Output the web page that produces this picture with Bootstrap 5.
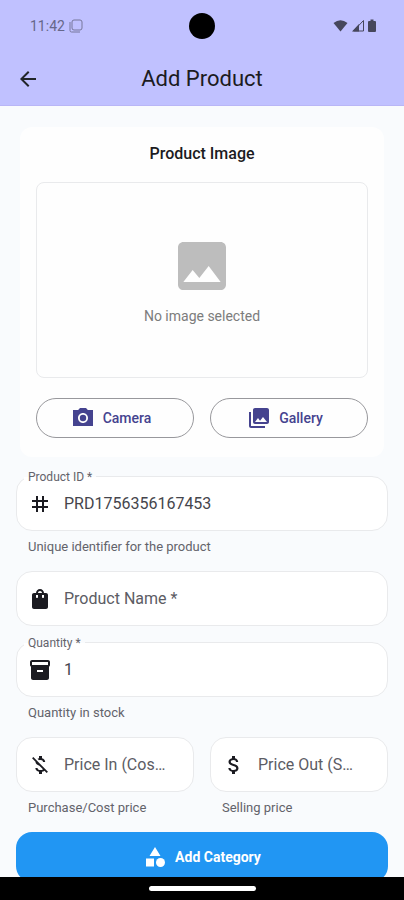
<!DOCTYPE html>
<html lang="en">
<head>
<meta charset="utf-8">
<meta name="viewport" content="width=device-width, initial-scale=1">
<title>Add Product</title>
<link href="https://cdn.jsdelivr.net/npm/bootstrap@5.3.0/dist/css/bootstrap.min.css" rel="stylesheet">
<style>
  :root { --page: #f9fbfd; --line: #e9eaec; --ink: #1b1b21; --muted: #63636b; --brand: #45438f; }
  body { font-family: Roboto, "Liberation Sans", sans-serif; background: var(--page); color: var(--ink); }
  svg { display: block; flex: none; fill: currentColor; }
  .top-area { background: #c0c1ff; border-bottom: 1px solid #b9b6f6; }
  .status-bar { height: 52px; padding: 0 28px; color: #46475c; }
  .clock { font-size: 14px; color: #66678a; padding-left: 2px; }
  .lens { width: 26px; height: 26px; background: #000; }
  .app-bar { height: 53px; padding: 0 16px; }
  .app-title { font-size: 22px; line-height: 28px; }
  .side { flex: 1 1 0; }
  .content { min-height: 0; padding: 21px 16px 0; }
  .image-card { margin: 0 4px 19px; padding: 17px 16px 19px; border-radius: 12px; background: #fefefe; }
  .card-heading { font-size: 16px; line-height: 20px; font-weight: 500; margin-bottom: 18px; }
  .preview { height: 196px; border: 1px solid var(--line); border-radius: 8px; color: #bdbdbd; margin-bottom: 20px; }
  .preview-text { font-size: 14px; line-height: 20px; color: #7c7c7c; margin-top: 8px; }
  .pick { height: 40px; font-size: 14px; font-weight: 500; color: var(--brand); border: 1px solid #98989c; padding: 0 24px 0 16px; }
  .field-box { height: 55px; padding: 0 11px; gap: 12px; background: #fff; border: 1px solid var(--line); border-radius: 16px; }
  .field-box input { font-size: 16px; line-height: 24px; color: #45454c; outline: 0; min-width: 0; }
  .over-label { top: -8px; left: 7px; padding: 0 4px; font-size: 12px; line-height: 16px; color: var(--muted);
    background: linear-gradient(var(--page) 50%, #fff 50%); }
  .rest-label { top: 15px; left: 47px; right: 26px; font-size: 16px; line-height: 24px; color: #5c5c64; }
  .hint { font-size: 13px; line-height: 16px; margin: 8px 12px 0; color: var(--muted); }
  .stack { gap: 16px; }
  .category { height: 50px; border-radius: 16px; background: #2196f3; color: #fff; font-size: 14px; font-weight: 700; }
  .gesture-bar { height: 23px; background: #000; z-index: 1; }
  .gesture-pill { width: 107px; height: 5px; background: #fff; }
</style>
</head>
<body>
<div class="vh-100 d-flex flex-column overflow-hidden">
  <header class="top-area flex-shrink-0">
    <div class="status-bar d-flex align-items-center">
      <div class="side d-flex align-items-center gap-1">
        <span class="clock">11:42</span>
        <svg width="14" height="14" viewBox="0 0 14 14" style="fill:none" stroke="#77779b" aria-hidden="true"><rect x="3" y="1" width="10" height="10" rx="2"/><path d="M1 3v8.500q0 1.500 1.500 1.500H11"/></svg>
      </div>
      <div class="lens rounded-circle"></div>
      <div class="side d-flex align-items-center justify-content-end">
        <svg width="15" height="14" viewBox="0 0 15 14" aria-hidden="true"><path d="M.5 4Q7.500-1.500 14.500 4L7.500 12.500z"/></svg>
        <svg class="ms-1" width="12" height="14" viewBox="0 0 12 14" aria-hidden="true"><path d="M0 12.500 7 5v7.500z"/><path d="M1.500 12 11.500 1.500V12z" fill="none" stroke="currentColor"/></svg>
        <svg class="ms-1" width="8" height="14" viewBox="0 0 8 14" aria-hidden="true"><path d="M2.500.5h3V2H7q1 0 1 1v9q0 1-1 1H1q-1 0-1-1V3q0-1 1-1h1.500z"/></svg>
      </div>
    </div>
    <div class="app-bar d-flex align-items-center">
      <div class="side">
        <button type="button" class="btn p-0 border-0" aria-label="Back"><svg width="24" height="24" viewBox="0 0 24 24"><path d="M20 11H7.830l5.590-5.590L12 4l-8 8 8 8 1.410-1.410L7.830 13H20v-2z"/></svg></button>
      </div>
      <h1 class="app-title fw-normal mb-0">Add Product</h1>
      <div class="side"></div>
    </div>
  </header>

  <main class="content flex-grow-1 overflow-hidden">
    <section class="image-card">
      <h2 class="card-heading text-center">Product Image</h2>
      <div class="preview d-flex flex-column align-items-center justify-content-center">
        <svg width="64" height="64" viewBox="0 0 24 24" aria-hidden="true"><path d="M21 19V5c0-1.100-.9-2-2-2H5c-1.100 0-2 .9-2 2v14c0 1.100.9 2 2 2h14c1.100 0 2-.9 2-2zM8.500 13.500l2.500 3.010L14.500 12l4.500 6H5l3.500-4.500z"/></svg>
        <div class="preview-text">No image selected</div>
      </div>
      <div class="row g-3">
        <div class="col-6">
          <button type="button" class="pick btn rounded-pill w-100 d-flex align-items-center justify-content-center gap-2"><svg width="24" height="24" viewBox="0 0 24 24" aria-hidden="true"><path d="M9 2L7.170 4H2v16h20V4h-5.170L15 2H9zm3 15c-2.760 0-5-2.240-5-5s2.240-5 5-5 5 2.240 5 5-2.240 5-5 5z"/><circle cx="12" cy="12" r="3.200"/></svg>Camera</button>
        </div>
        <div class="col-6">
          <button type="button" class="pick btn rounded-pill w-100 d-flex align-items-center justify-content-center gap-2"><svg width="24" height="24" viewBox="0 0 24 24" aria-hidden="true"><path d="M22 16V4c0-1.100-.9-2-2-2H8c-1.100 0-2 .9-2 2v12c0 1.100.9 2 2 2h12c1.100 0 2-.9 2-2zm-11-4l2.030 2.710L16 11l4 5H8l3-4zM2 6v14c0 1.100.9 2 2 2h14v-2H4V6H2z"/></svg>Gallery</button>
        </div>
      </div>
    </section>

    <form class="stack d-flex flex-column">
      <div>
        <div class="field-box position-relative d-flex align-items-center">
          <label for="pid" class="over-label position-absolute">Product ID *</label>
          <svg width="24" height="24" viewBox="0 0 24 24" aria-hidden="true"><path d="M20 10V8h-4V4h-2v4h-4V4H8v4H4v2h4v4H4v2h4v4h2v-4h4v4h2v-4h4v-2h-4v-4h4zm-6 4h-4v-4h4v4z"/></svg>
          <input id="pid" type="text" class="flex-grow-1 border-0 bg-transparent p-0" value="PRD1756356167453">
        </div>
        <div class="hint">Unique identifier for the product</div>
      </div>
      <div class="field-box position-relative d-flex align-items-center">
        <svg width="24" height="24" viewBox="0 0 24 24" aria-hidden="true"><path d="M18 6h-2c0-2.210-1.790-4-4-4S8 3.790 8 6H6c-1.100 0-2 .9-2 2v12c0 1.100.9 2 2 2h12c1.100 0 2-.9 2-2V8c0-1.100-.9-2-2-2zm-8 4c0 .55-.45 1-1 1s-1-.45-1-1V8h2v2zm2-6c1.100 0 2 .9 2 2h-4c0-1.100.9-2 2-2zm4 6c0 .55-.45 1-1 1s-1-.45-1-1V8h2v2z"/></svg>
        <input id="pname" type="text" class="flex-grow-1 border-0 bg-transparent p-0">
        <label for="pname" class="rest-label position-absolute text-truncate">Product Name *</label>
      </div>
      <div>
        <div class="field-box position-relative d-flex align-items-center">
          <label for="qty" class="over-label position-absolute">Quantity *</label>
          <svg width="24" height="24" viewBox="0 0 24 24" aria-hidden="true"><path d="M20 2H4c-1 0-2 .9-2 2v3.010c0 .72.430 1.340 1 1.690V20c0 1.100 1.100 2 2 2h14c.9 0 2-.9 2-2V8.700c.57-.35 1-.97 1-1.690V4c0-1.100-1-2-2-2zm-5 12H9v-2h6v2zm5-7H4V4h16v3z"/></svg>
          <input id="qty" type="text" inputmode="numeric" class="flex-grow-1 border-0 bg-transparent p-0" value="1">
        </div>
        <div class="hint">Quantity in stock</div>
      </div>
      <div class="row g-3 mt-0">
        <div class="col-6 mt-0">
          <div class="field-box position-relative d-flex align-items-center">
            <svg width="24" height="24" viewBox="0 0 24 24" aria-hidden="true"><path d="M12.500 6.900c1.780 0 2.440.85 2.500 2.100h2.210c-.07-1.720-1.120-3.300-3.210-3.810V3h-3v2.160c-.53.12-1.030.3-1.480.54l1.470 1.470c.41-.17.910-.27 1.510-.27zM5.330 4.060L4.060 5.330 7.500 8.770c0 2.080 1.560 3.210 3.910 3.910l3.510 3.510c-.34.480-1.050.910-2.420.910-2.060 0-2.870-.92-2.980-2.100h-2.200c.12 2.190 1.760 3.420 3.680 3.830V21h3v-2.150c.96-.18 1.820-.55 2.450-1.120l2.220 2.220 1.270-1.270L5.330 4.060z"/></svg>
            <input id="pin" type="text" inputmode="decimal" class="flex-grow-1 border-0 bg-transparent p-0">
            <label for="pin" class="rest-label position-absolute text-truncate">Price In (Cost) *</label>
          </div>
          <div class="hint">Purchase/Cost price</div>
        </div>
        <div class="col-6 mt-0">
          <div class="field-box position-relative d-flex align-items-center">
            <svg width="24" height="24" viewBox="0 0 24 24" aria-hidden="true"><path d="M11.800 10.900c-2.270-.59-3-1.200-3-2.150 0-1.090 1.010-1.850 2.700-1.850 1.780 0 2.440.85 2.500 2.100h2.210c-.07-1.720-1.120-3.300-3.210-3.810V3h-3v2.160c-1.940.42-3.500 1.680-3.500 3.610 0 2.310 1.910 3.460 4.700 4.130 2.500.6 3 1.480 3 2.410 0 .69-.49 1.790-2.700 1.790-2.060 0-2.870-.92-2.980-2.100h-2.200c.12 2.190 1.760 3.420 3.680 3.830V21h3v-2.150c1.950-.37 3.500-1.500 3.500-3.550 0-2.840-2.430-3.810-4.700-4.400z"/></svg>
            <input id="pout" type="text" inputmode="decimal" class="flex-grow-1 border-0 bg-transparent p-0">
            <label for="pout" class="rest-label position-absolute text-truncate">Price Out (Selling) *</label>
          </div>
          <div class="hint">Selling price</div>
        </div>
      </div>
      <button type="button" class="category btn border-0 w-100 p-0 d-flex align-items-center justify-content-center gap-2"><svg width="24" height="24" viewBox="0 0 24 24" aria-hidden="true"><path d="M12 2l-5.500 9h11zM3 13.500h8v8H3z"/><circle cx="17.500" cy="17.500" r="4.500"/></svg>Add Category</button>
    </form>
  </main>

  <footer class="gesture-bar flex-shrink-0 d-flex align-items-center justify-content-center">
    <div class="gesture-pill rounded-pill"></div>
  </footer>
</div>
<script src="https://cdn.jsdelivr.net/npm/bootstrap@5.3.0/dist/js/bootstrap.bundle.min.js"></script>
</body>
</html>
